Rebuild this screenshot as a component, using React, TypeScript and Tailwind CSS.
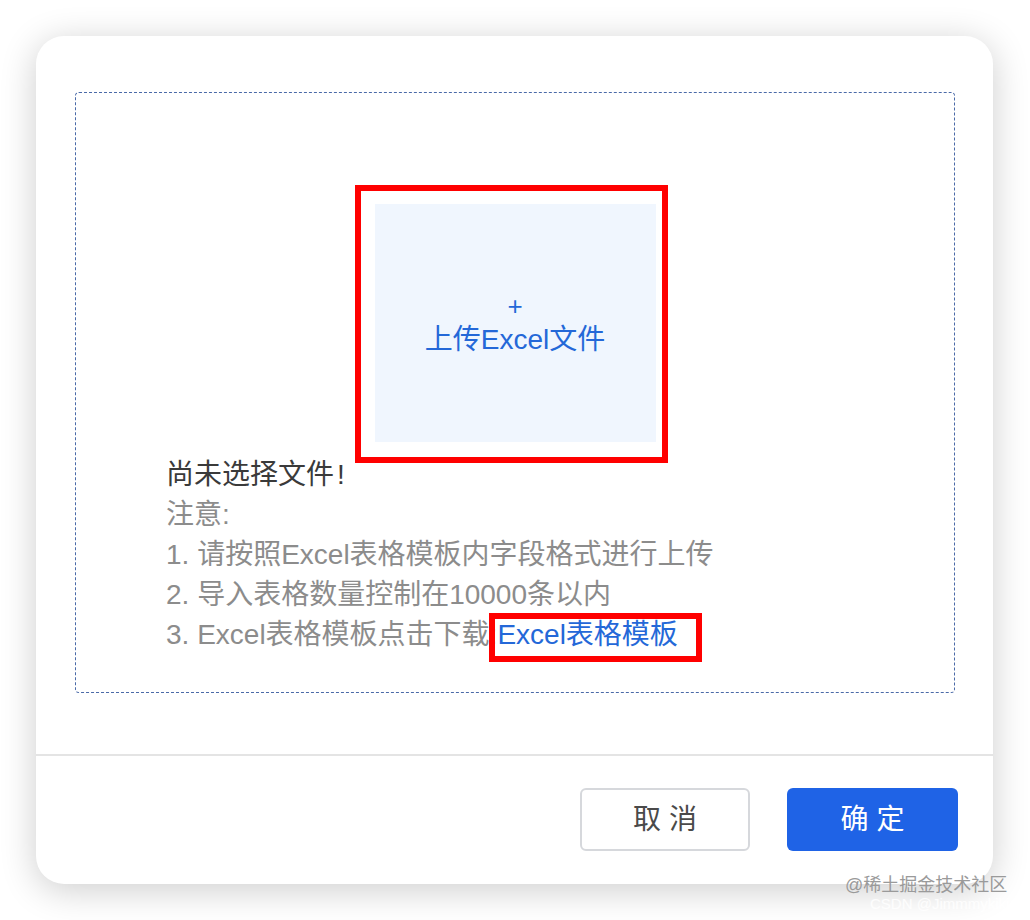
import React from "react";

const font = "font-['Liberation_Sans','Noto_Sans_CJK_SC',sans-serif]";

export default function App() {
  return (
    <div className={`relative h-[920px] w-full overflow-hidden bg-white pl-[36px] pt-[36px] ${font}`}>
      <div className="flex h-[848px] w-[957px] flex-col rounded-[28px] bg-white shadow-[0_6px_36px_rgba(0,0,0,0.2)]">
        <div className="px-[38px] pl-[39px] pt-[56px]">
          <div className="h-[601px] rounded-[4px] border border-dashed border-[#4a6aa8] pt-[111px]">
            <div className="mx-auto flex h-[238px] w-[281px] flex-col items-center justify-center bg-[#f0f6fe] text-[28px] leading-[33px] text-[#2468d8]">
              <span className="text-[26px]">+</span>
              <span>上传Excel文件</span>
            </div>
            <div className="mt-[13px] pl-[90px] text-[28px] leading-[40px] text-[#8c8c8c]">
              <p className="text-[#3a3a3a]">
                尚未选择文件<span className="pl-[3px]">!</span>
              </p>
              <p>注意:</p>
              <p>1. 请按照Excel表格模板内字段格式进行上传</p>
              <p>2. 导入表格数量控制在10000条以内</p>
              <p>
                3. Excel表格模板点击下载:
                <a className="text-[#2468d8]">Excel表格模板</a>
              </p>
            </div>
          </div>
        </div>
        <div className="mt-[61px] h-[2px] bg-[#e4e4e4]" />
        <div className="flex justify-end gap-[37px] pr-[35px] pt-[32px]">
          <button className="h-[63px] w-[170px] rounded-[6px] border-2 border-[#d6d8dc] bg-white text-[28px] text-[#4a4a4a]">
            取 消
          </button>
          <button className="h-[63px] w-[171px] rounded-[6px] bg-[#1f63e6] text-[28px] text-white">
            确 定
          </button>
        </div>
      </div>

      {/* annotation boxes */}
      <div className="absolute left-[355px] top-[185px] h-[278px] w-[313px] border-[6px] border-[#ff0000]" />
      <div className="absolute left-[489px] top-[613px] h-[49px] w-[213px] border-[6px] border-[#ff0000]" />

      {/* watermark */}
      <div className="absolute left-[845px] top-[875px] whitespace-nowrap text-[18px] leading-[20px] text-[#9a9a9a]">
        @稀土掘金技术社区
      </div>
      <div className="absolute left-[870px] top-[895px] whitespace-nowrap text-[15px] leading-[18px] text-white/80">
        CSDN @Jimmmykiki
      </div>
    </div>
  );
}
